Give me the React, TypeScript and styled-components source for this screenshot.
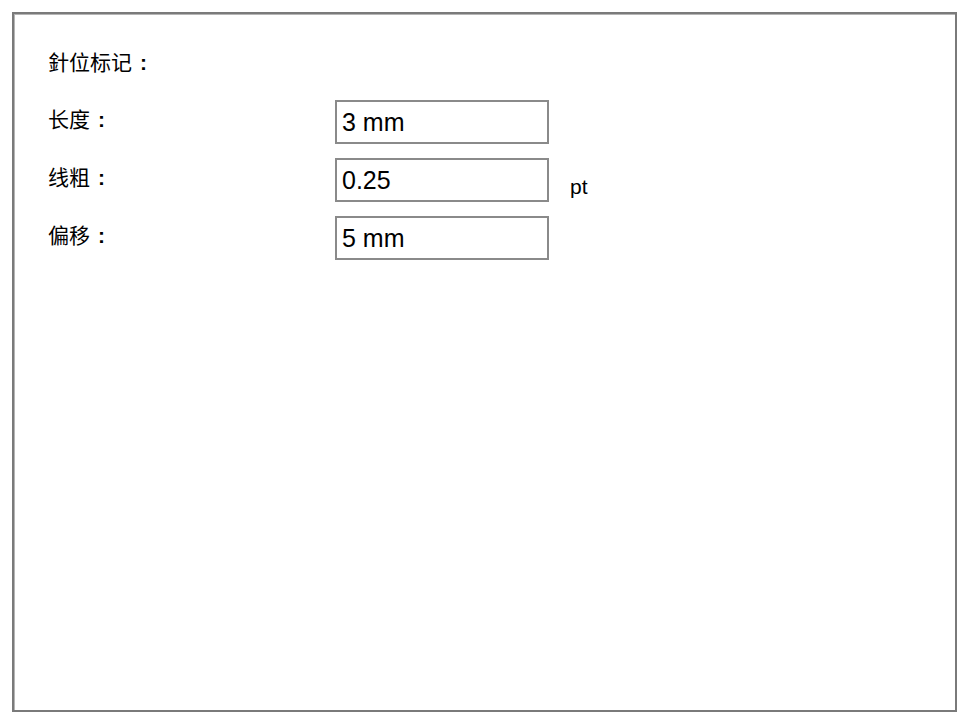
import React from "react";
import styled, { createGlobalStyle } from "styled-components";

const Global = createGlobalStyle`
  html, body { margin: 0; padding: 0; background: #ffffff; }
  body { font-family: "Liberation Sans", "Noto Sans CJK SC", sans-serif; color: #000; }
`;

const Page = styled.div`
  padding: 12px 0 0 12px;
`;

const Panel = styled.div`
  box-sizing: border-box;
  width: 945px;
  height: 700px;
  border: 2px solid #7a7a7a;
  box-shadow: inset 1px 1px 0 #b5b5b5;
  padding: 35px 34px;
`;

const Title = styled.div`
  font-family: "Noto Sans CJK SC", sans-serif;
  font-size: 21px;
  line-height: 24px;
  height: 24px;
  margin-bottom: 27px;
`;

const Colon = styled.span`
  font-family: "Liberation Sans", sans-serif;
  font-weight: bold;
  line-height: 1;
  margin-left: 8px;
`;

const Form = styled.div`
  display: grid;
  grid-template-columns: 266px 214px auto;
  grid-auto-rows: 44px;
  column-gap: 21px;
  row-gap: 14px;
  align-items: start;
`;

const Label = styled.div`
  font-family: "Noto Sans CJK SC", sans-serif;
  font-size: 21px;
  line-height: 24px;
  padding-top: 6px;
`;

const Field = styled.input`
  box-sizing: border-box;
  width: 214px;
  height: 44px;
  margin: 0;
  border: 2px solid #8a8a8a;
  padding: 0 0 0 5px;
  font-family: "Liberation Sans", sans-serif;
  font-size: 25px;
  color: #000;
  background: #fff;
  outline: none;
`;

const Unit = styled.div`
  font-family: "Liberation Sans", sans-serif;
  font-size: 21px;
  line-height: 24px;
  padding-top: 17px;
`;

const rows = [
  { label: "长度", value: "3 mm", unit: "" },
  { label: "线粗", value: "0.25", unit: "pt" },
  { label: "偏移", value: "5 mm", unit: "" },
];

export default function App() {
  return (
    <>
      <Global />
      <Page>
        <Panel>
          <Title>
            針位标记<Colon>:</Colon>
          </Title>
          <Form>
            {rows.map((r) => (
              <React.Fragment key={r.label}>
                <Label>
                  {r.label}
                  <Colon>:</Colon>
                </Label>
                <Field defaultValue={r.value} />
                <Unit>{r.unit}</Unit>
              </React.Fragment>
            ))}
          </Form>
        </Panel>
      </Page>
    </>
  );
}
